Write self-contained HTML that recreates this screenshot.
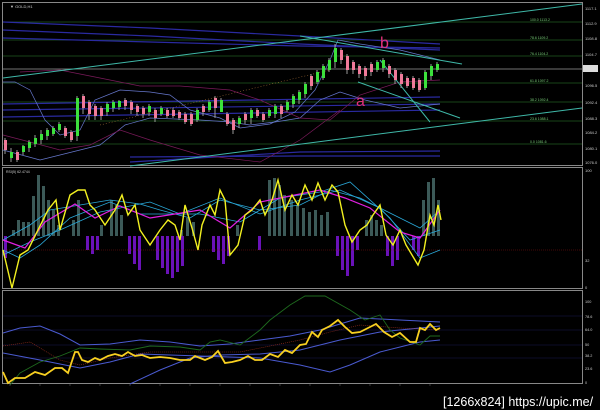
<!DOCTYPE html>
<html><head><meta charset="utf-8"><style>
html,body{margin:0;padding:0;background:#000;width:600px;height:410px;overflow:hidden}
svg{display:block}
text{font-family:"Liberation Sans",sans-serif}
</style></head><body>
<svg width="600" height="410" viewBox="0 0 600 410" xmlns="http://www.w3.org/2000/svg">
<rect width="600" height="410" fill="#000"/>
<rect x="2.5" y="2.5" width="580" height="163" fill="none" stroke="#888" stroke-width="1"/>
<text x="10" y="8" fill="#ccc" font-size="4">▼ GOLD,H1</text>
<g stroke="#1f5a1f" stroke-width="0.8">
<line x1="3" y1="22" x2="582" y2="22"/><line x1="3" y1="40" x2="582" y2="40"/>
<line x1="3" y1="56" x2="582" y2="56"/><line x1="3" y1="83" x2="582" y2="83"/>
<line x1="3" y1="102" x2="582" y2="102"/><line x1="3" y1="121" x2="582" y2="121"/>
<line x1="3" y1="144" x2="582" y2="144"/>
</g>
<line x1="3" y1="69" x2="582" y2="69" stroke="#999" stroke-width="0.8"/>
<g fill="#7c7" font-size="3.5">
<text x="530" y="21">100.0 1113.2</text><text x="530" y="39">78.6 1109.2</text>
<text x="530" y="55">76.4 1104.2</text><text x="530" y="82">61.8 1097.2</text>
<text x="530" y="101">38.2 1092.4</text><text x="530" y="120">23.6 1088.1</text>
<text x="530" y="143">0.0 1081.6</text>
</g>
<g fill="#ccc" font-size="4">
<text x="585" y="10">1117.1</text><text x="585" y="25">1112.9</text><text x="585" y="40">1108.8</text>
<text x="585" y="56">1104.7</text><text x="585" y="87">1096.5</text><text x="585" y="104">1092.4</text>
<text x="585" y="120">1088.3</text><text x="585" y="134">1084.2</text><text x="585" y="150">1080.1</text>
<text x="585" y="164">1076.0</text>
</g>
<rect x="583" y="65" width="15" height="7" fill="#ddd"/>
<g fill="none" stroke="#2a2aa0" stroke-width="1.2">
<path d="M3 22 L150 28 L300 36 L440 44"/><path d="M3 30 L150 36 L300 44 L440 50"/>
<path d="M3 38 L150 42 L300 46 L440 48"/>
<path d="M3 104 L440 97"/><path d="M3 110 L440 104"/><path d="M3 117 L440 110"/>
<path d="M130 162 L300 152 L440 151"/><path d="M130 157 L300 156 L440 156"/>
</g>
<g fill="none" stroke="#6677cc" stroke-width="0.7">
<path d="M3 82 L15 82 L30 90 L45 120 L60 135 L80 130 L95 100 L120 90 L150 92 L170 95 L190 110 L220 118 L240 128 L270 124 L295 112 L315 90 L330 60 L338 40 L360 44 L400 50 L440 60"/>
<path d="M3 150 L40 160 L80 150 L100 145 L125 125 L150 118 L200 120 L230 122 L250 125 L275 122 L300 118 L320 100 L340 92 L365 100 L400 108 L440 104"/>
</g>
<g fill="none" stroke="#7a1a5a" stroke-width="0.7">
<path d="M20 72 L60 70 L100 78 L140 86 L180 86 L230 90 L260 100 L300 118 L330 120 L360 95 L400 82 L440 80"/>
<path d="M3 135 L30 142 L60 150 L90 145 L120 130 L150 140 L200 155 L260 162 L300 140 L340 110"/>
</g>
<g stroke="#3fb8a8" stroke-width="1" fill="none">
<path d="M3 78 L582 4"/><path d="M130 166 L582 108"/>
<path d="M300 36 L462 64"/><path d="M358 82 L460 118"/><path d="M380 60 L430 122"/>
</g>
<line x1="100" y1="125" x2="330" y2="70" stroke="#c08040" stroke-width="0.5" stroke-dasharray="1,2"/>
<g stroke-width="1">
<path d="M5 138v16M11 148v14M17 150v12M23 145v10M29 140v12M35 135v12M41 130v14M47 128v12M53 126v10M59 122v10M65 126v12M71 130v12M77 96v45M83 94v20M89 100v20M95 104v16M101 106v14M107 102v14M113 100v12M119 100v10M125 98v12M131 100v14M137 104v12M143 106v12M149 104v12M155 108v14M161 106v10M167 108v10M173 108v10M179 110v10M185 112v12M191 112v14M197 108v14M203 104v12M209 100v12M215 96v22M221 98v14M227 112v14M233 118v16M239 116v12M245 112v12M251 108v16M257 108v10M263 112v10M269 108v10M275 104v14M281 104v14M287 100v12M293 94v14M299 90v14M305 82v16M311 74v16M317 70v14M323 64v16M329 58v14M335 44v24M341 48v16M347 54v20M353 60v14M359 64v14M365 66v14M371 62v14M377 60v12M383 58v14M389 64v14M395 68v16M401 72v16M407 76v12M413 76v14M419 78v14M425 70v20M431 64v16M437 62v10"
 stroke="#999"/>
</g>
<g fill="#3ce03c">
<rect x="10" y="152" width="3" height="6"/><rect x="22" y="146" width="3" height="6"/><rect x="28" y="142" width="3" height="6"/>
<rect x="34" y="138" width="3" height="6"/><rect x="40" y="134" width="3" height="6"/><rect x="46" y="130" width="3" height="6"/>
<rect x="52" y="128" width="3" height="6"/><rect x="58" y="124" width="3" height="6"/><rect x="76" y="98" width="3" height="38"/>
<rect x="106" y="104" width="3" height="8"/><rect x="112" y="102" width="3" height="6"/><rect x="118" y="101" width="3" height="6"/>
<rect x="148" y="106" width="3" height="6"/><rect x="160" y="108" width="3" height="6"/><rect x="196" y="110" width="3" height="10"/>
<rect x="208" y="102" width="3" height="8"/><rect x="220" y="100" width="3" height="12"/><rect x="238" y="118" width="3" height="6"/>
<rect x="250" y="110" width="3" height="8"/><rect x="268" y="110" width="3" height="6"/><rect x="274" y="106" width="3" height="8"/>
<rect x="286" y="102" width="3" height="8"/><rect x="292" y="96" width="3" height="8"/><rect x="298" y="92" width="3" height="8"/>
<rect x="304" y="84" width="3" height="10"/><rect x="316" y="72" width="3" height="10"/><rect x="322" y="66" width="3" height="12"/>
<rect x="328" y="60" width="3" height="10"/><rect x="334" y="48" width="3" height="14"/><rect x="376" y="62" width="3" height="8"/>
<rect x="382" y="60" width="3" height="8"/><rect x="424" y="72" width="3" height="16"/><rect x="430" y="66" width="3" height="10"/><rect x="436" y="64" width="3" height="6"/>
</g>
<g fill="#f07a9a">
<rect x="4" y="140" width="3" height="10"/><rect x="16" y="152" width="3" height="8"/><rect x="64" y="128" width="3" height="8"/>
<rect x="70" y="132" width="3" height="8"/><rect x="82" y="96" width="3" height="12"/><rect x="88" y="102" width="3" height="12"/>
<rect x="94" y="106" width="3" height="10"/><rect x="100" y="108" width="3" height="8"/><rect x="124" y="100" width="3" height="6"/>
<rect x="130" y="102" width="3" height="8"/><rect x="136" y="106" width="3" height="6"/><rect x="142" y="108" width="3" height="6"/>
<rect x="154" y="110" width="3" height="8"/><rect x="166" y="110" width="3" height="6"/><rect x="172" y="110" width="3" height="6"/>
<rect x="178" y="112" width="3" height="6"/><rect x="184" y="114" width="3" height="8"/><rect x="190" y="114" width="3" height="10"/>
<rect x="202" y="106" width="3" height="6"/><rect x="214" y="98" width="3" height="10"/><rect x="226" y="114" width="3" height="10"/>
<rect x="232" y="120" width="3" height="10"/><rect x="244" y="114" width="3" height="6"/><rect x="256" y="110" width="3" height="6"/>
<rect x="262" y="114" width="3" height="6"/><rect x="280" y="106" width="3" height="8"/><rect x="310" y="76" width="3" height="10"/>
<rect x="340" y="50" width="3" height="10"/><rect x="346" y="56" width="3" height="14"/><rect x="352" y="62" width="3" height="8"/>
<rect x="358" y="66" width="3" height="8"/><rect x="364" y="68" width="3" height="8"/><rect x="370" y="64" width="3" height="8"/>
<rect x="388" y="66" width="3" height="8"/><rect x="394" y="70" width="3" height="10"/><rect x="400" y="74" width="3" height="10"/>
<rect x="406" y="78" width="3" height="8"/><rect x="412" y="78" width="3" height="10"/><rect x="418" y="80" width="3" height="10"/>
</g>
<text x="380" y="48" fill="#e0307a" font-size="16" font-family="Liberation Serif">b</text>
<text x="356" y="106" fill="#e0307a" font-size="16" font-family="Liberation Serif">a</text>
<rect x="2.5" y="167.5" width="580" height="121" fill="none" stroke="#888"/>
<text x="6" y="173" fill="#ccc" font-size="3.5">RSI(5) 62.4744</text>
<g fill="#3c5a58">
<path d="M12 236V230h3v6zM17 236V220h3v16zM22 236V222h3v14zM27 236V222h3v14zM32 236V196h3v40zM37 236V175h3v61zM42 236V186h3v50zM47 236V200h3v36zM52 236V210h3v26zM57 236V225h3v11zM72 236V220h3v16zM77 236V200h3v36zM100 236V225h3v11zM110 236V200h3v36zM115 236V205h3v31zM120 236V215h3v21zM180 236V230h3v6zM186 236V218h3v18zM192 236V222h3v14zM236 236V225h3v11zM268 236V180h3v56zM273 236V178h3v58zM278 236V185h3v51zM283 236V195h3v41zM290 236V200h3v36zM296 236V205h3v31zM302 236V208h3v28zM308 236V212h3v24zM314 236V210h3v26zM320 236V215h3v21zM326 236V212h3v24zM365 236V220h3v16zM370 236V215h3v21zM375 236V220h3v16zM380 236V225h3v11zM422 236V200h3v36zM427 236V182h3v54zM432 236V178h3v58zM437 236V200h3v36z"/>
</g>
<g fill="#6a12b8">
<path d="M4 236v22h3v-22zM86 236v14h3v-14zM91 236v18h3v-18zM96 236v14h3v-14zM128 236v18h3v-18zM133 236v28h3v-28zM138 236v34h3v-34zM156 236v24h3v-24zM161 236v32h3v-32zM166 236v38h3v-38zM171 236v42h3v-42zM176 236v36h3v-36zM181 236v30h3v-30zM212 236v16h3v-16zM217 236v24h3v-24zM222 236v28h3v-28zM227 236v20h3v-20zM258 236v14h3v-14zM336 236v20h3v-20zM341 236v34h3v-34zM346 236v40h3v-40zM351 236v30h3v-30zM356 236v14h3v-14zM386 236v20h3v-20zM391 236v30h3v-30zM396 236v24h3v-24zM412 236v14h3v-14zM417 236v20h3v-20z"/>
</g>
<line x1="3" y1="250" x2="582" y2="250" stroke="#8a1010" stroke-width="0.6" stroke-dasharray="1,1"/>
<g fill="none" stroke="#2aa8d8" stroke-width="0.8">
<path d="M3 240 L30 225 L50 210 L80 205 L110 200 L140 204 L160 210 L190 218 L220 200 L260 210 L300 205 L330 190 L360 198 L400 218 L420 228 L440 210"/>
<path d="M3 255 L30 242 L60 230 L100 212 L150 202 L180 214 L220 198 L260 214 L300 200 L340 190 L380 208 L410 240 L440 230"/>
<path d="M3 250 L20 258 L40 245 L70 218 L110 202 L140 214 L200 214 L240 222 L280 198 L320 192 L350 182 L390 218 L420 258 L440 250"/>
</g>
<path d="M3 240 L25 248 L45 222 L75 204 L95 218 L120 206 L150 218 L175 214 L200 210 L230 228 L260 202 L290 196 L320 190 L345 198 L370 208 L400 232 L420 238 L440 210" fill="none" stroke="#e020e0" stroke-width="1.2"/>
<path d="M3 250 L12 288 L20 255 L28 250 L38 230 L48 210 L56 200 L60 230 L70 195 L78 190 L85 190 L90 205 L95 210 L105 225 L115 210 L122 195 L128 215 L135 205 L140 230 L150 245 L160 230 L168 220 L175 225 L180 240 L185 205 L192 228 L198 250 L202 225 L210 205 L215 215 L220 190 L225 200 L230 255 L238 245 L245 215 L252 210 L260 200 L265 215 L272 200 L278 180 L285 210 L292 195 L298 205 L305 185 L312 200 L318 183 L325 200 L332 185 L338 192 L345 225 L352 242 L360 230 L367 225 L373 215 L380 205 L386 235 L393 245 L400 230 L406 245 L412 255 L418 265 L424 250 L430 215 L434 225 L438 205 L441 220" fill="none" stroke="#f2f020" stroke-width="1.4"/>
<g fill="#ccc" font-size="4"><text x="585" y="172">100</text><text x="585" y="262">32</text><text x="585" y="289">0</text></g>
<rect x="2.5" y="290.5" width="580" height="93" fill="none" stroke="#888"/>
<g stroke="#1a1a50" stroke-width="0.6"><line x1="3" y1="316" x2="582" y2="316"/><line x1="3" y1="330" x2="582" y2="330"/><line x1="3" y1="345" x2="582" y2="345"/><line x1="3" y1="358" x2="582" y2="358"/></g>
<g fill="#ccc" font-size="3.8"><text x="585" y="303">100</text><text x="585" y="318">78.6</text><text x="585" y="331">64.0</text><text x="585" y="346">50</text><text x="585" y="357">38.2</text><text x="585" y="370">23.6</text><text x="585" y="384">0</text></g>
<g fill="none" stroke="#4a5ad0" stroke-width="1">
<path d="M3 333 L20 328 L40 326 L60 334 L80 345 L110 344 L140 340 L170 342 L200 346 L230 344 L260 340 L290 336 L320 330 L340 324 L360 318 L400 320 L440 322"/>
<path d="M3 353 L40 360 L80 368 L110 362 L140 354 L200 356 L260 358 L300 365 L330 372 L350 365 L380 352 L420 342 L440 340"/>
<path d="M130 384 L160 370 L190 358 L220 355 L260 354 L300 350 L340 340 L380 332 L440 326"/>
</g>
<path d="M10 385 L20 373 L40 362 L60 356 L80 348 L100 349 L130 350 L150 346 L180 347 L200 350 L210 342 L220 340 L240 345 L260 330 L270 320 L290 305 L305 296 L325 296 L350 310 L365 320 L380 315 L390 330 L400 338 L420 345 L430 336 L440 336" fill="none" stroke="#1e6a1e" stroke-width="0.9"/>
<path d="M3 346 L30 342 L60 360 L80 365 L110 358 L150 352 L200 352 L240 352 L270 346 L300 340 L330 332 L360 325 L400 328 L440 330" fill="none" stroke="#a03020" stroke-width="0.6" stroke-dasharray="1,1"/>
<path d="M3 372 L8 383 L15 378 L25 378 L35 372 L45 375 L55 368 L62 368 L68 373 L75 352 L78 352 L82 360 L88 362 L95 358 L100 360 L108 356 L115 354 L122 356 L128 352 L135 356 L142 355 L150 358 L160 357 L170 358 L180 360 L190 360 L195 356 L205 360 L212 357 L218 351 L225 363 L232 362 L240 360 L248 356 L255 360 L262 360 L270 354 L278 357 L285 350 L292 353 L300 345 L306 344 L312 332 L318 337 L322 330 L330 326 L338 320 L345 327 L352 333 L360 332 L368 328 L376 324 L384 332 L392 337 L400 333 L410 342 L416 342 L420 328 L425 330 L430 324 L436 330 L440 328" fill="none" stroke="#f8d020" stroke-width="1.8"/>
<g stroke="#555" stroke-width="0.6"><path d="M10 384v2M40 384v2M70 384v2M100 384v2M130 384v2M160 384v2M190 384v2M220 384v2M250 384v2M280 384v2M310 384v2M340 384v2M370 384v2M400 384v2M430 384v2"/></g>
<text x="443" y="406" fill="#fff" font-size="12.5" font-family="Liberation Mono">[1266x824] https://upic.me/</text>
</svg>
</body></html>
